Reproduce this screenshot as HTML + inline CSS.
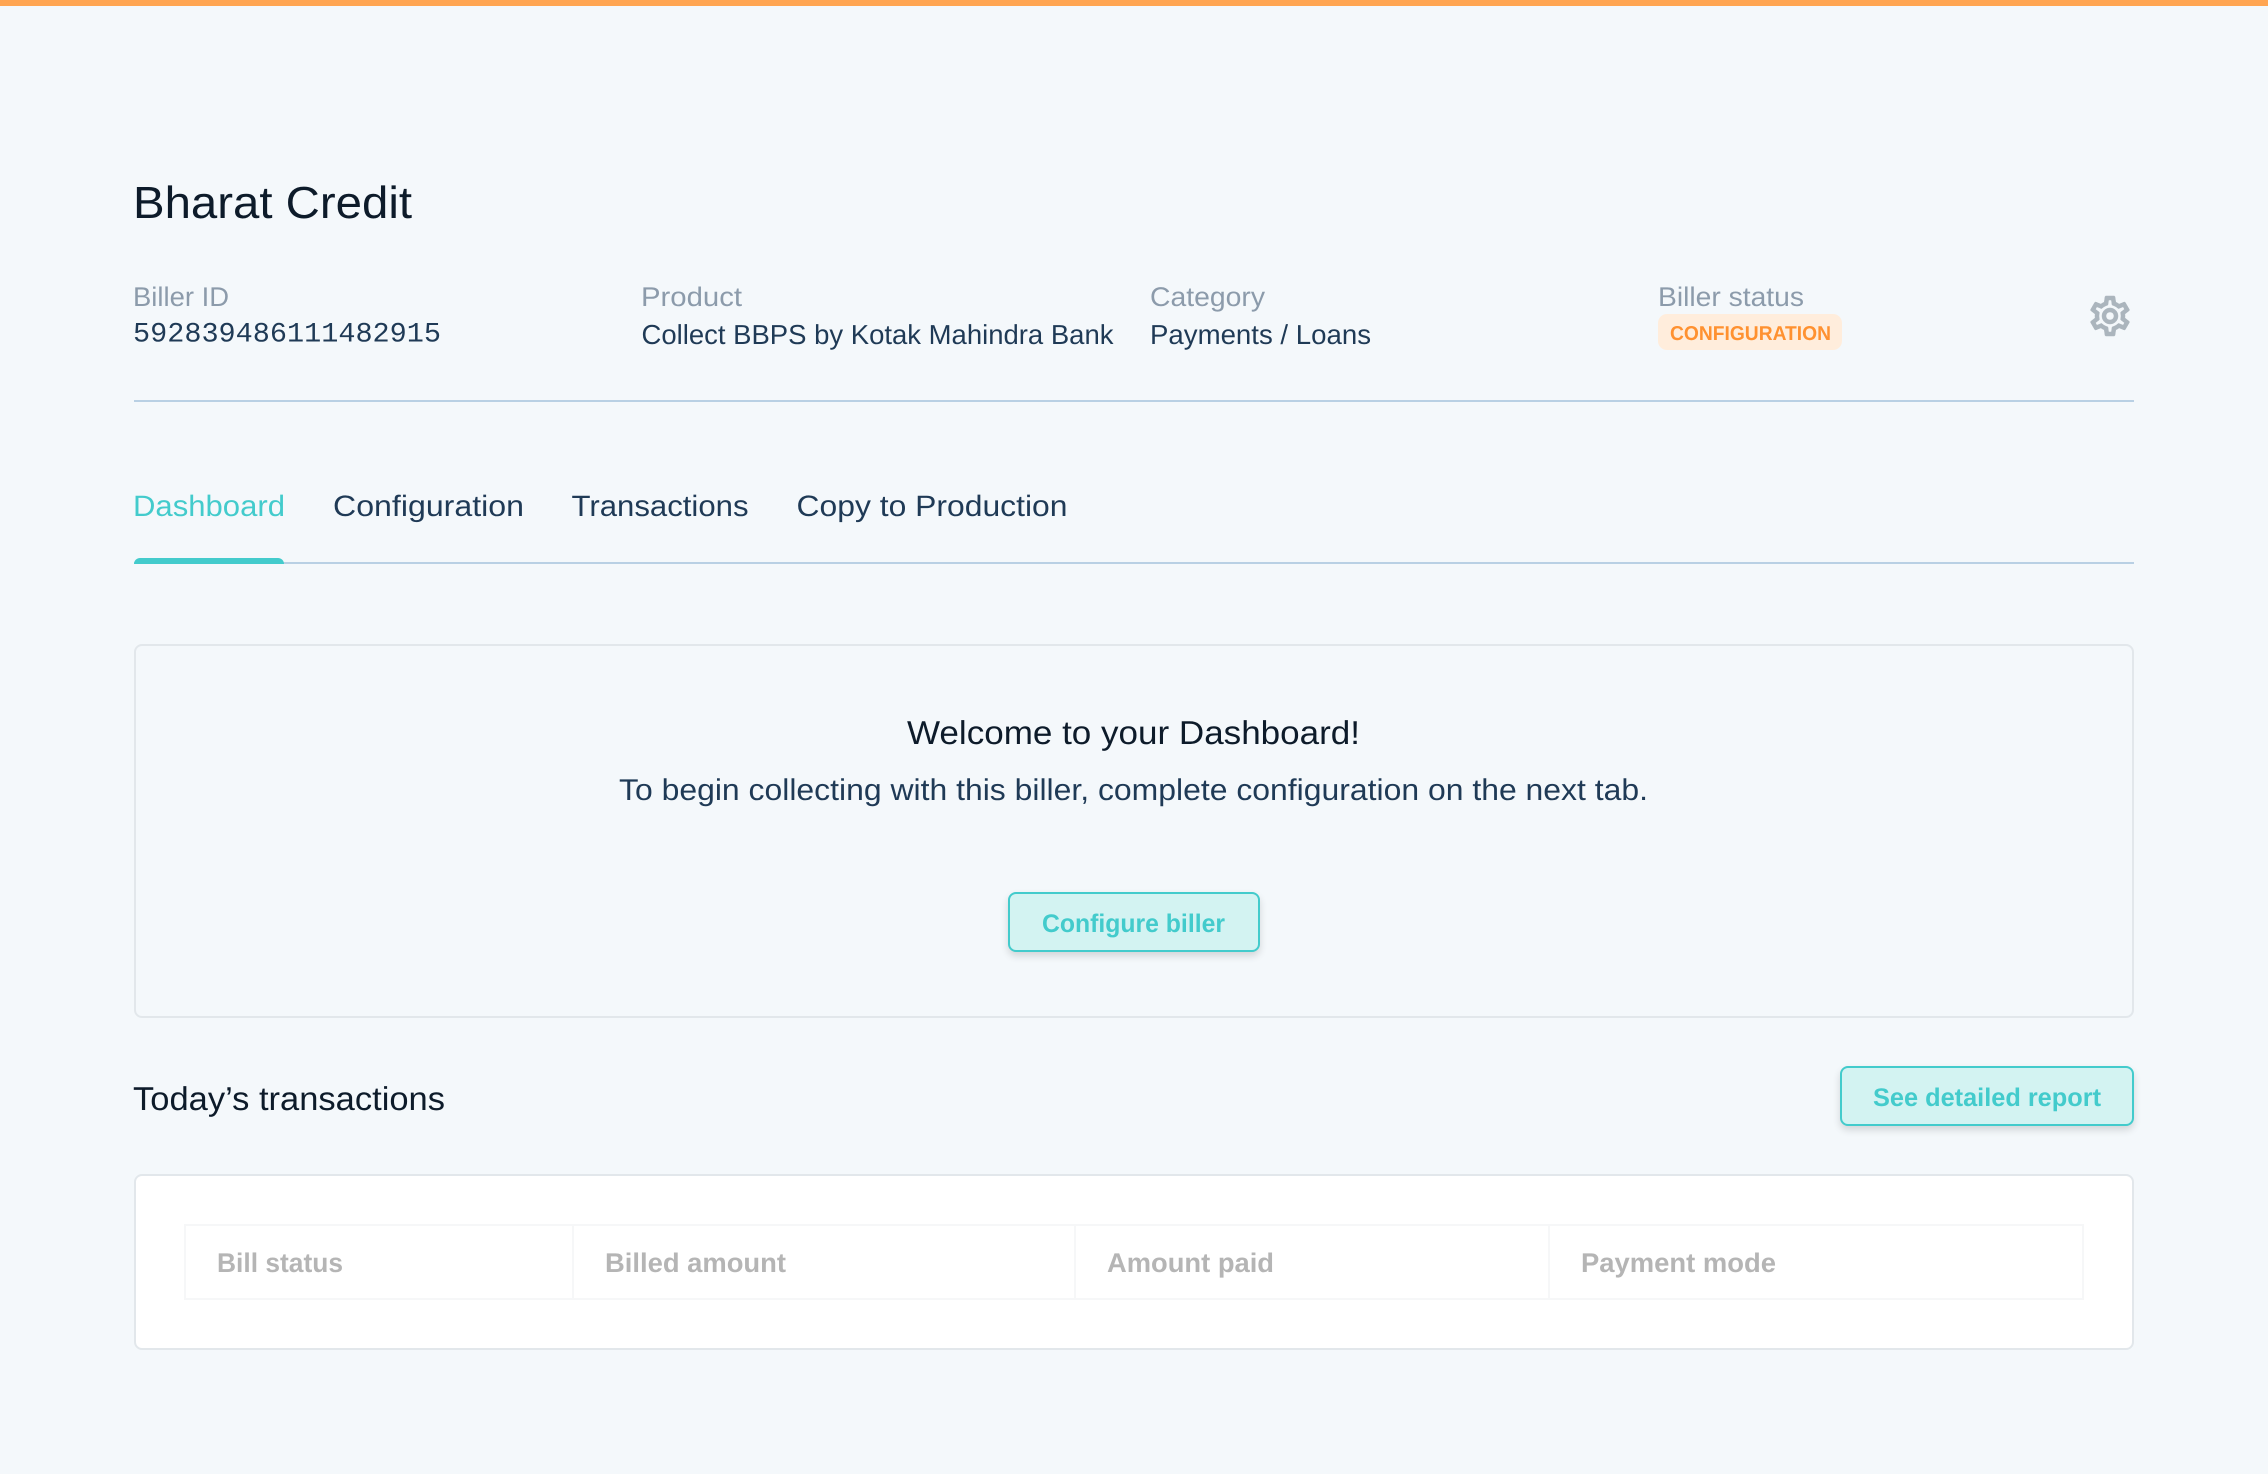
<!DOCTYPE html>
<html lang="en">
<head>
<meta charset="utf-8">
<title>Bharat Credit</title>
<style>
html,body{margin:0;padding:0;width:2268px;height:1474px;overflow:hidden;background:#f4f8fb}
body{position:relative;font-family:"Liberation Sans",sans-serif}
.b{position:absolute;box-sizing:border-box}
svg.t{position:absolute;left:0;top:0}
text{font-family:"Liberation Sans",sans-serif;text-rendering:geometricPrecision}
.l{font-size:27px;fill:#8c9bab}
.v{font-size:27.5px;fill:#1f3a56}
.tab{font-size:29.5px;fill:#1f3a56}
.th{font-size:27px;fill:#b5b5b5;font-weight:700}
.btn{font-size:25.5px;fill:#43cbcc;font-weight:700}
</style>
</head>
<body>
<div class="b" style="left:0;top:0;width:2268px;height:6px;background:#ffa552"></div>
<div class="b" style="left:134px;top:400px;width:2000px;height:2px;background:#b9d0e4"></div>
<div class="b" style="left:134px;top:562px;width:2000px;height:2px;background:#b9d0e4"></div>
<div class="b" style="left:134px;top:558px;width:150px;height:6px;background:#43cbcc;border-radius:6px 6px 0 0"></div>
<div class="b" style="left:1658px;top:314px;width:184px;height:36px;background:#ffeddc;border-radius:9px"></div>
<div class="b" style="left:134px;top:644px;width:2000px;height:374px;border:2px solid #e2e7eb;border-radius:8px"></div>
<div class="b" style="left:1008px;top:892px;width:252px;height:60px;background:#d3f3f2;border:2px solid #43cbcc;border-radius:8px;box-shadow:0 4px 8px rgba(0,0,0,.14)"></div>
<div class="b" style="left:1840px;top:1066px;width:294px;height:60px;background:#d3f3f2;border:2px solid #43cbcc;border-radius:8px;box-shadow:0 4px 8px rgba(0,0,0,.14)"></div>
<div class="b" style="left:134px;top:1174px;width:2000px;height:176px;background:#fff;border:2px solid #e2e7eb;border-radius:8px"></div>
<div class="b" style="left:184px;top:1224px;width:1900px;height:76px;border:2px solid #f6f7f8"></div>
<div class="b" style="left:572px;top:1224px;width:2px;height:76px;background:#f6f7f8"></div>
<div class="b" style="left:1074px;top:1224px;width:2px;height:76px;background:#f6f7f8"></div>
<div class="b" style="left:1548px;top:1224px;width:2px;height:76px;background:#f6f7f8"></div>
<svg class="b" style="left:2086px;top:292px" width="48" height="48" viewBox="0 0 24 24"><path fill="#abb5bd" stroke="#abb5bd" stroke-width=".25" d="M19.43 12.98c.04-.32.07-.64.07-.98 0-.34-.03-.66-.07-.98l2.11-1.65c.19-.15.24-.42.12-.64l-2-3.46c-.09-.16-.26-.25-.44-.25-.06 0-.12.01-.17.03l-2.49 1c-.52-.4-1.08-.73-1.69-.98l-.38-2.65C14.46 2.18 14.25 2 14 2h-4c-.25 0-.46.18-.49.42l-.38 2.65c-.61.25-1.17.59-1.69.98l-2.49-1c-.06-.02-.12-.03-.18-.03-.17 0-.34.09-.43.25l-2 3.46c-.13.22-.07.49.12.64l2.11 1.65c-.04.32-.07.65-.07.98 0 .33.03.66.07.98l-2.11 1.65c-.19.15-.24.42-.12.64l2 3.46c.09.16.26.25.44.25.06 0 .12-.01.17-.03l2.49-1c.52.4 1.08.73 1.69.98l.38 2.65c.03.24.24.42.49.42h4c.25 0 .46-.18.49-.42l.38-2.65c.61-.25 1.17-.59 1.69-.98l2.49 1c.06.02.12.03.18.03.17 0 .34-.09.43-.25l2-3.46c.12-.22.07-.49-.12-.64l-2.11-1.65zm-1.98-1.71c.04.31.05.52.05.73 0 .21-.02.43-.05.73l-.14 1.13.89.7 1.08.84-.7 1.21-1.27-.51-1.04-.42-.9.68c-.43.32-.84.56-1.25.73l-1.06.43-.16 1.13-.2 1.35h-1.4l-.19-1.35-.16-1.13-1.06-.43c-.43-.18-.83-.41-1.23-.71l-.91-.7-1.06.43-1.27.51-.7-1.21 1.08-.84.89-.7-.14-1.13c-.03-.31-.05-.54-.05-.74s.02-.43.05-.73l.14-1.13-.89-.7-1.08-.84.7-1.21 1.27.51 1.04.42.9-.68c.43-.32.84-.56 1.25-.73l1.06-.43.16-1.13.2-1.35h1.39l.19 1.35.16 1.13 1.06.43c.43.18.83.41 1.23.71l.91.7 1.06-.43 1.27-.51.7 1.21-1.07.85-.89.7.14 1.13zM12 8c-2.21 0-4 1.79-4 4s1.79 4 4 4 4-1.79 4-4-1.79-4-4-4zm0 6c-1.1 0-2-.9-2-2s.9-2 2-2 2 .9 2 2-.9 2-2 2z"/></svg>
<svg class="t" width="2268" height="1474" viewBox="0 0 2268 1474">
<text x="133" y="218" font-size="45" fill="#0d1b2a" textLength="279" lengthAdjust="spacingAndGlyphs">Bharat Credit</text>
<text class="l" x="133" y="306" textLength="96" lengthAdjust="spacingAndGlyphs">Biller ID</text>
<text x="133" y="341.5" style="font-family:'Liberation Mono',monospace" font-size="28" fill="#1f3a56" textLength="308" lengthAdjust="spacingAndGlyphs">592839486111482915</text>
<text class="l" x="641" y="306" textLength="101" lengthAdjust="spacingAndGlyphs">Product</text>
<text class="v" x="641.5" y="344" textLength="472" lengthAdjust="spacingAndGlyphs">Collect BBPS by Kotak Mahindra Bank</text>
<text class="l" x="1150" y="306" textLength="115" lengthAdjust="spacingAndGlyphs">Category</text>
<text class="v" x="1150" y="344" textLength="221" lengthAdjust="spacingAndGlyphs">Payments / Loans</text>
<text class="l" x="1658" y="306" textLength="146" lengthAdjust="spacingAndGlyphs">Biller status</text>
<text x="1670" y="340" font-size="20" font-weight="700" fill="#ff9130" textLength="161" lengthAdjust="spacingAndGlyphs">CONFIGURATION</text>
<text class="tab" x="133" y="516" style="fill:#43cbcc" textLength="152" lengthAdjust="spacingAndGlyphs">Dashboard</text>
<text class="tab" x="333" y="516" textLength="191" lengthAdjust="spacingAndGlyphs">Configuration</text>
<text class="tab" x="571.5" y="516" textLength="177" lengthAdjust="spacingAndGlyphs">Transactions</text>
<text class="tab" x="796.5" y="516" textLength="271" lengthAdjust="spacingAndGlyphs">Copy to Production</text>
<text x="907" y="744" font-size="33" fill="#0d1b2a" textLength="453" lengthAdjust="spacingAndGlyphs">Welcome to your Dashboard!</text>
<text x="619" y="800" font-size="30" fill="#1f3a56" textLength="1029" lengthAdjust="spacingAndGlyphs">To begin collecting with this biller, complete configuration on the next tab.</text>
<text class="btn" x="1042" y="932" textLength="183" lengthAdjust="spacingAndGlyphs">Configure biller</text>
<text x="133" y="1110" font-size="33" fill="#0d1b2a" textLength="312" lengthAdjust="spacingAndGlyphs">Today’s transactions</text>
<text class="btn" x="1873" y="1106" textLength="228" lengthAdjust="spacingAndGlyphs">See detailed report</text>
<text class="th" x="217" y="1272" textLength="126" lengthAdjust="spacingAndGlyphs">Bill status</text>
<text class="th" x="605" y="1272" textLength="181" lengthAdjust="spacingAndGlyphs">Billed amount</text>
<text class="th" x="1107" y="1272" textLength="167" lengthAdjust="spacingAndGlyphs">Amount paid</text>
<text class="th" x="1581" y="1272" textLength="195" lengthAdjust="spacingAndGlyphs">Payment mode</text>
</svg>
</body>
</html>
